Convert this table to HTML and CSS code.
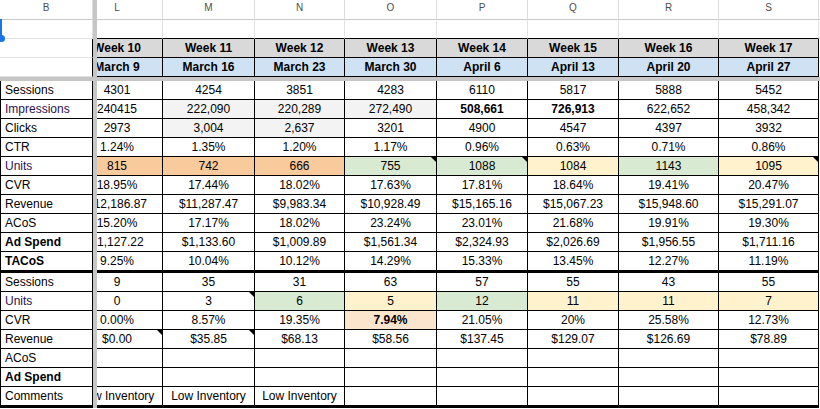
FILE: index.html
```html
<!DOCTYPE html>
<html>
<head>
<meta charset="utf-8">
<link rel="stylesheet" href="styles.css">
</head>
<body>
<div class="sheet">
  <div class="r hdr">
    <div class="h">B</div><div class="fz"></div>
    <div class="h l"><span>L</span></div><div class="h">M</div><div class="h">N</div><div class="h">O</div><div class="h">P</div><div class="h">Q</div><div class="h">R</div><div class="h">S</div><div class="h f"></div>
  </div>
  <div class="r">
    <div class="e eb"><i class="sel"></i><i class="dot"></i></div><div class="fz"></div>
    <div class="e"></div><div class="e"></div><div class="e"></div><div class="e"></div><div class="e"></div><div class="e"></div><div class="e"></div><div class="e"></div><div class="e f"></div>
  </div>
  <div class="r">
    <div class="e eb k"></div><div class="fz"></div>
    <div class="c wk l"><span>Week 10</span></div><div class="c wk">Week 11</div><div class="c wk">Week 12</div><div class="c wk">Week 13</div><div class="c wk">Week 14</div><div class="c wk">Week 15</div><div class="c wk">Week 16</div><div class="c wk">Week 17</div>
  </div>
  <div class="r">
    <div class="e eb k"></div><div class="fz"></div>
    <div class="c dt l"><span>March 9</span></div><div class="c dt">March 16</div><div class="c dt">March 23</div><div class="c dt">March 30</div><div class="c dt">April 6</div><div class="c dt">April 13</div><div class="c dt">April 20</div><div class="c dt">April 27</div>
  </div>
  <div class="hd"></div>

  <div class="r">
    <div class="c lab">Sessions</div><div class="fz"></div>
    <div class="c l"><span>4301</span></div><div class="c">4254</div><div class="c">3851</div><div class="c">4283</div><div class="c">6110</div><div class="c">5817</div><div class="c">5888</div><div class="c">5452</div>
  </div>
  <div class="r">
    <div class="c lab pu">Impressions</div><div class="fz"></div>
    <div class="c l"><span>240415</span></div><div class="c g1">222,090</div><div class="c g1">220,289</div><div class="c g1">272,490</div><div class="c b">508,661</div><div class="c b">726,913</div><div class="c">622,652</div><div class="c">458,342</div>
  </div>
  <div class="r">
    <div class="c lab">Clicks</div><div class="fz"></div>
    <div class="c l"><span>2973</span></div><div class="c g1">3,004</div><div class="c g1">2,637</div><div class="c">3201</div><div class="c">4900</div><div class="c">4547</div><div class="c">4397</div><div class="c">3932</div>
  </div>
  <div class="r">
    <div class="c lab">CTR</div><div class="fz"></div>
    <div class="c l"><span>1.24%</span></div><div class="c">1.35%</div><div class="c">1.20%</div><div class="c">1.17%</div><div class="c">0.96%</div><div class="c">0.63%</div><div class="c">0.71%</div><div class="c">0.86%</div>
  </div>
  <div class="r">
    <div class="c lab pu">Units</div><div class="fz"></div>
    <div class="c l or"><span>815</span></div><div class="c or">742</div><div class="c or">666</div><div class="c gr">755<i class="note"></i></div><div class="c gr">1088<i class="note"></i></div><div class="c ye">1084</div><div class="c gr">1143</div><div class="c ye">1095<i class="note"></i></div>
  </div>
  <div class="r">
    <div class="c lab">CVR</div><div class="fz"></div>
    <div class="c l"><span>18.95%</span></div><div class="c">17.44%</div><div class="c">18.02%</div><div class="c">17.63%</div><div class="c">17.81%</div><div class="c">18.64%</div><div class="c">19.41%</div><div class="c">20.47%</div>
  </div>
  <div class="r">
    <div class="c lab">Revenue</div><div class="fz"></div>
    <div class="c l"><span>$12,186.87</span></div><div class="c">$11,287.47</div><div class="c">$9,983.34</div><div class="c">$10,928.49</div><div class="c">$15,165.16</div><div class="c">$15,067.23</div><div class="c">$15,948.60</div><div class="c">$15,291.07</div>
  </div>
  <div class="r">
    <div class="c lab">ACoS</div><div class="fz"></div>
    <div class="c l"><span>15.20%</span></div><div class="c">17.17%</div><div class="c">18.02%</div><div class="c">23.24%</div><div class="c">23.01%</div><div class="c">21.68%</div><div class="c">19.91%</div><div class="c">19.30%</div>
  </div>
  <div class="r">
    <div class="c lab b">Ad Spend</div><div class="fz"></div>
    <div class="c l"><span>$1,127.22</span></div><div class="c">$1,133.60</div><div class="c">$1,009.89</div><div class="c">$1,561.34</div><div class="c">$2,324.93</div><div class="c">$2,026.69</div><div class="c">$1,956.55</div><div class="c">$1,711.16</div>
  </div>
  <div class="r thick">
    <div class="c lab b">TACoS</div><div class="fz"></div>
    <div class="c l"><span>9.25%</span></div><div class="c">10.04%</div><div class="c">10.12%</div><div class="c">14.29%</div><div class="c">15.33%</div><div class="c">13.45%</div><div class="c">12.27%</div><div class="c">11.19%</div>
  </div>

  <div class="r">
    <div class="c lab">Sessions</div><div class="fz"></div>
    <div class="c l"><span>9</span></div><div class="c">35</div><div class="c">31</div><div class="c">63</div><div class="c">57</div><div class="c">55</div><div class="c">43</div><div class="c">55</div>
  </div>
  <div class="r">
    <div class="c lab pu">Units</div><div class="fz"></div>
    <div class="c l"><span>0</span></div><div class="c">3<i class="note"></i></div><div class="c gr">6</div><div class="c ye">5</div><div class="c gr">12</div><div class="c ye">11</div><div class="c ye">11</div><div class="c ye">7</div>
  </div>
  <div class="r">
    <div class="c lab">CVR</div><div class="fz"></div>
    <div class="c l"><span>0.00%</span></div><div class="c">8.57%</div><div class="c">19.35%</div><div class="c pe b">7.94%</div><div class="c">21.05%</div><div class="c">20%</div><div class="c">25.58%</div><div class="c">12.73%</div>
  </div>
  <div class="r">
    <div class="c lab">Revenue</div><div class="fz"></div>
    <div class="c l"><span>$0.00</span><i class="note"></i></div><div class="c">$35.85<i class="note"></i></div><div class="c">$68.13</div><div class="c">$58.56</div><div class="c">$137.45</div><div class="c">$129.07</div><div class="c">$126.69</div><div class="c">$78.89</div>
  </div>
  <div class="r">
    <div class="c lab">ACoS</div><div class="fz"></div>
    <div class="c l"></div><div class="c"></div><div class="c"></div><div class="c"></div><div class="c"></div><div class="c"></div><div class="c"></div><div class="c"></div>
  </div>
  <div class="r">
    <div class="c lab b">Ad Spend</div><div class="fz"></div>
    <div class="c l"></div><div class="c"></div><div class="c"></div><div class="c"></div><div class="c"></div><div class="c"></div><div class="c"></div><div class="c"></div>
  </div>
  <div class="r thick">
    <div class="c lab">Comments</div><div class="fz"></div>
    <div class="c l"><span>Low Inventory</span></div><div class="c">Low Inventory</div><div class="c">Low Inventory</div><div class="c"></div><div class="c"></div><div class="c"></div><div class="c"></div><div class="c"></div>
  </div>
</div>
</body>
</html>
```

FILE: styles.css
```css
html, body {
  margin: 0;
  padding: 0;
  background: #fff;
  overflow: hidden;
}

body {
  font-family: "Liberation Sans", Arial, sans-serif;
  color: #000;
}

.sheet {
  width: 820px;
}

.r {
  display: grid;
  grid-template-columns: 93px 4px 66px 92px 90px 92px 91px 91px 100px 100px 1fr;
  height: 19px;
}

.hdr {
  height: 20px;
}

.r.thick {
  height: 21px;
}

.fz {
  background: #c6c6c6;
}

.hd {
  height: 4px;
  background: #c6c6c6;
}

/* column header letters */
.h {
  box-sizing: border-box;
  border-right: 1px solid #dcdcdc;
  border-bottom: 1px solid #c8c8c8;
  font-size: 10px;
  line-height: 16px;
  color: #4d4d4d;
  text-align: center;
  overflow: hidden;
  white-space: nowrap;
}

/* empty grid cells at top */
.e {
  box-sizing: border-box;
  border-right: 1px solid #e2e2e2;
  border-bottom: 1px solid #000;
  position: relative;
}

.e.eb {
  border-bottom-color: #e2e2e2;
}

.e.k {
  border-right-color: #000;
}

.f {
  border-right: none;
}

.e.f {
  border-bottom-color: #e2e2e2;
}

/* data cells */
.c {
  box-sizing: border-box;
  border-right: 1px solid #000;
  border-bottom: 1px solid #000;
  font-size: 12px;
  line-height: 18px;
  text-align: center;
  white-space: nowrap;
  overflow: hidden;
  position: relative;
}

.thick .c {
  border-bottom-width: 3px;
}

.lab {
  text-align: left;
  border-left: 1px solid #000;
  padding-left: 4px;
}

/* scrolled, partially hidden column L */
.l > span {
  display: block;
  width: 90px;
  margin-left: -25px;
  text-align: center;
}

.wk {
  background: #d9d9d9;
  font-weight: bold;
}

.dt {
  background: #cfe2f3;
  font-weight: bold;
}

.b {
  font-weight: bold;
}

.pu {
  color: #2b1252;
}

.g1 { background: #f3f3f3; }
.or { background: #f9cb9c; }
.gr { background: #d9ead3; }
.ye { background: #fff2cc; }
.pe { background: #fce5cd; }

.note {
  position: absolute;
  top: 0;
  right: 0;
  width: 0;
  height: 0;
  border-top: 5px solid #000;
  border-left: 5px solid transparent;
}

.sel {
  position: absolute;
  left: 0;
  top: -1px;
  width: 2px;
  height: 20px;
  background: #1a73e8;
}

.dot {
  position: absolute;
  left: -2px;
  top: 15px;
  width: 7px;
  height: 7px;
  border-radius: 50%;
  background: #1a73e8;
  z-index: 2;
}
```
